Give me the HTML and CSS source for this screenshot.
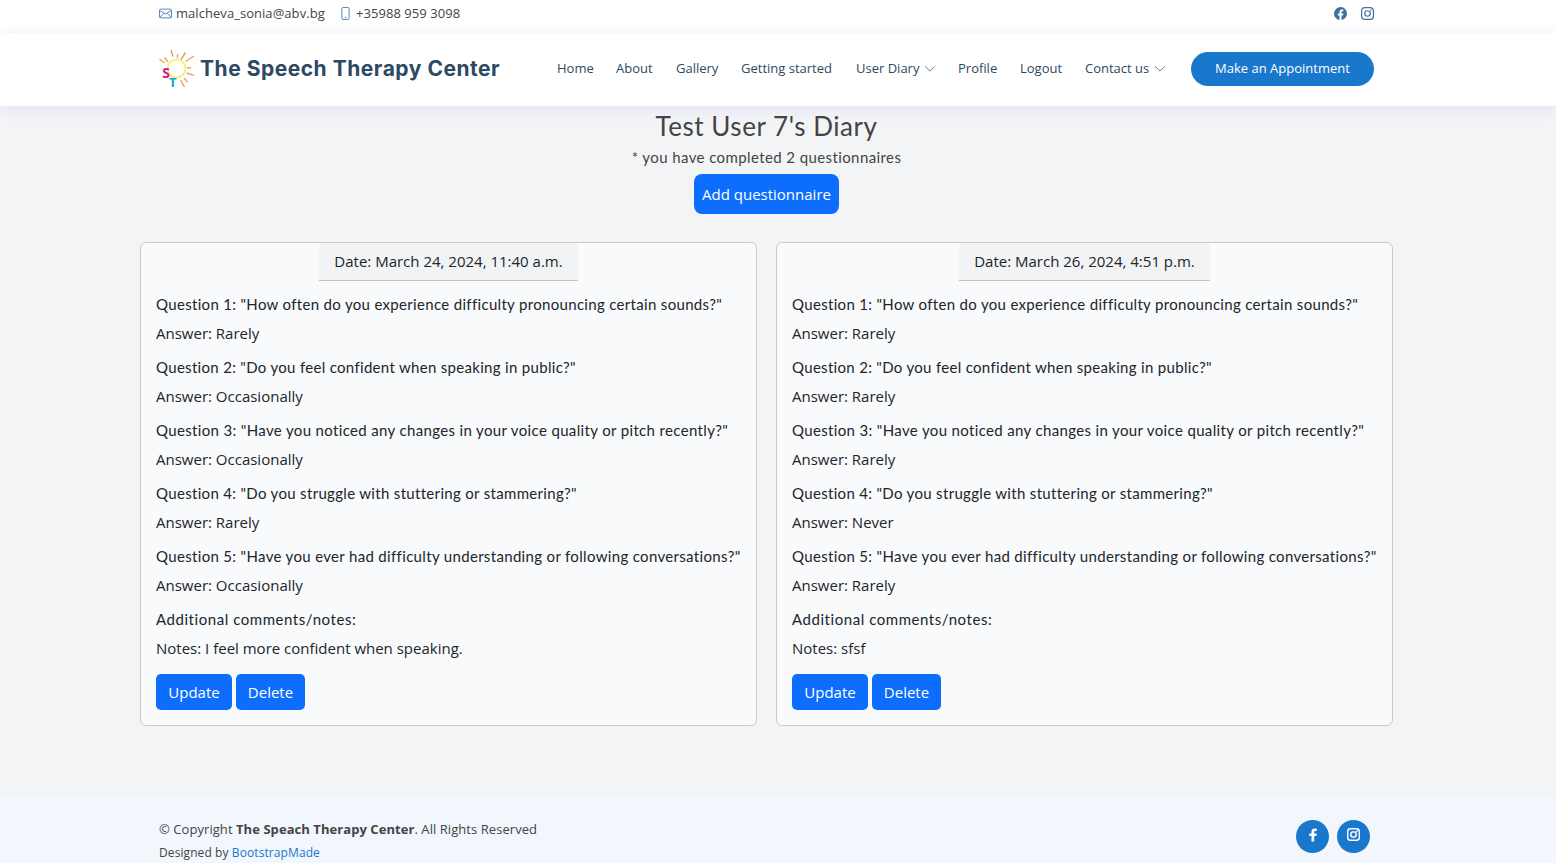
FILE: index.html
```html
<!DOCTYPE html>
<html lang="en">
<head>
<meta charset="utf-8">
<title>The Speech Therapy Center</title>
<link rel="stylesheet" href="styles.css">
</head>
<body>
<svg class="defs" width="0" height="0">
  <symbol id="instagram" viewBox="0 0 16 16"><path fill-rule="evenodd" d="M4.7 0h6.6A4.7 4.7 0 0 1 16 4.700v6.600A4.700 4.700 0 0 1 11.300 16H4.700A4.700 4.700 0 0 1 0 11.300V4.700A4.700 4.700 0 0 1 4.700 0zm.1 1.450A3.350 3.350 0 0 0 1.450 4.800v6.400a3.350 3.350 0 0 0 3.350 3.350h6.400a3.350 3.350 0 0 0 3.350-3.350V4.800a3.350 3.350 0 0 0-3.350-3.350zM8 3.900a4.100 4.100 0 1 1 0 8.200 4.100 4.100 0 0 1 0-8.200zm0 1.440a2.660 2.660 0 1 0 0 5.320 2.660 2.660 0 0 0 0-5.320z"/><circle cx="12.270" cy="3.730" r=".96"/></symbol>
  <symbol id="chevron" viewBox="0 0 12 12"><path d="M1.300 3.500 6 8.200l4.700-4.700" fill="none" stroke="currentColor" stroke-width="1" stroke-linecap="round" stroke-linejoin="round"/></symbol>
</svg>
<div class="topbar">
  <div class="container topbar-row">
    <div class="contact">
      <svg class="icon-mail" viewBox="0 0 16 16" width="13" height="13"><g fill="none" stroke="currentColor" stroke-width="1.200"><rect x=".6" y="2.600" width="14.800" height="10.800" rx="1.500"/><path d="M.8 4.300 8 8.600l7.200-4.300M.9 12.700l5.300-5.100M15.100 12.700 9.800 7.600"/></g></svg>
      <span class="mail">malcheva_sonia@abv.bg</span>
      <svg class="icon-phone" viewBox="0 0 16 16" width="13" height="13"><rect x="3.500" y=".6" width="9" height="14.800" rx="1.500" fill="none" stroke="currentColor" stroke-width="1.200"/><circle cx="8" cy="13" r="1" fill="currentColor"/></svg>
      <span class="phone">+35988 959 3098</span>
    </div>
    <div class="social">
      <svg viewBox="0 0 16 16" width="13" height="13" fill="currentColor"><path d="M16 8.050A8 8 0 1 0 6.750 16v-5.620H4.720V8.050h2.030V6.280c0-2.020 1.200-3.130 3.020-3.130.88 0 1.790.16 1.790.16v1.980h-1.010c-1 0-1.300.62-1.300 1.260v1.500h2.220l-.36 2.330H9.250V16A8 8 0 0 0 16 8.050z"/></svg>
      <svg width="13" height="13" fill="currentColor"><use href="#instagram"/></svg>
    </div>
  </div>
</div>
<header class="header">
  <div class="container header-row">
    <div class="brand">
      <svg class="logo" viewBox="0 0 38 40" width="38" height="40">
        <circle cx="17.500" cy="19.500" r="9" fill="none" stroke="#f8ee60" stroke-width="1.700"/>
        <g stroke="#e8a068" stroke-width="1.400" fill="none">
          <path d="M12 .8 14 7.800M18.500 5v4M26.500 3.500l-4.500 7M35 7l-8.500 5.500M.5 10l5 4M5.500 8.500 9 13M28 18.700h4M27.500 24l7.500 2.300M21.500 31l4 7M25 29l3.500 4"/>
        </g>
        <text class="logo-s" x="3.300" y="28.500">S</text>
        <text class="logo-t" x="10" y="38">T</text>
      </svg>
      <span class="name">The Speech Therapy Center</span>
    </div>
    <nav class="nav">
      <a>Home</a><a>About</a><a>Gallery</a><a>Getting started</a>
      <a>User Diary<svg width="12" height="12"><use href="#chevron"/></svg></a>
      <a>Profile</a><a>Logout</a>
      <a>Contact us<svg width="12" height="12"><use href="#chevron"/></svg></a>
    </nav>
    <a class="appointment">Make an Appointment</a>
  </div>
</header>
<main class="main">
  <h1 class="title">Test User 7's Diary</h1>
  <p class="subtitle">* you have completed 2 questionnaires</p>
  <a class="add">Add questionnaire</a>
  <div class="cards">
    <article class="card">
      <div class="date date-a">Date: March 24, 2024, 11:40 a.m.</div>
      <h2 class="q q1">Question 1: "How often do you experience difficulty pronouncing certain sounds?"</h2><p class="a">Answer: Rarely</p>
      <h2 class="q q2">Question 2: "Do you feel confident when speaking in public?"</h2><p class="a">Answer: Occasionally</p>
      <h2 class="q q3">Question 3: "Have you noticed any changes in your voice quality or pitch recently?"</h2><p class="a">Answer: Occasionally</p>
      <h2 class="q q4">Question 4: "Do you struggle with stuttering or stammering?"</h2><p class="a">Answer: Rarely</p>
      <h2 class="q q5">Question 5: "Have you ever had difficulty understanding or following conversations?"</h2><p class="a">Answer: Occasionally</p>
      <h2 class="q q6">Additional comments/notes:</h2><p class="a">Notes: I feel more confident when speaking.</p>
      <div class="actions"><a class="btn update">Update</a><a class="btn delete">Delete</a></div>
    </article>
    <article class="card">
      <div class="date date-b">Date: March 26, 2024, 4:51 p.m.</div>
      <h2 class="q q1">Question 1: "How often do you experience difficulty pronouncing certain sounds?"</h2><p class="a">Answer: Rarely</p>
      <h2 class="q q2">Question 2: "Do you feel confident when speaking in public?"</h2><p class="a">Answer: Rarely</p>
      <h2 class="q q3">Question 3: "Have you noticed any changes in your voice quality or pitch recently?"</h2><p class="a">Answer: Rarely</p>
      <h2 class="q q4">Question 4: "Do you struggle with stuttering or stammering?"</h2><p class="a">Answer: Never</p>
      <h2 class="q q5">Question 5: "Have you ever had difficulty understanding or following conversations?"</h2><p class="a">Answer: Rarely</p>
      <h2 class="q q6">Additional comments/notes:</h2><p class="a">Notes: sfsf</p>
      <div class="actions"><a class="btn update">Update</a><a class="btn delete">Delete</a></div>
    </article>
  </div>
</main>
<footer class="footer">
  <div class="container footer-row">
    <div>
      <div class="copyright">© Copyright <strong>The Speach Therapy Center</strong>. All Rights Reserved</div>
      <div class="credits">Designed by <a>BootstrapMade</a></div>
    </div>
    <div class="circles">
      <a><svg viewBox="0 0 16 16" width="16" height="16" fill="currentColor"><path d="M9.200 14.500V8.900h2.200l.3-2.500H9.200V5.100c0-.7.2-1.200 1.200-1.200h1.400V1.700c-.3 0-1-.1-1.900-.1-2.100 0-3.400 1.100-3.400 3.200v1.600H4.300v2.500h2.200v5.600z"/></svg></a>
      <a><svg width="13" height="13" fill="currentColor" stroke="currentColor" stroke-width=".5"><use href="#instagram"/></svg></a>
    </div>
  </div>
</footer>
</body>
</html>
```
FILE: styles.css
```css
* { box-sizing: border-box; }
body { margin: 0; height: 863px; overflow: hidden; display: flex; flex-direction: column; background: #f3f4f6; color: #444; font: 400 13px "Open Sans", sans-serif; }
h1, h2, p { margin: 0; font-weight: 400; }
a { white-space: nowrap; }
svg { flex: none; }
.defs { position: absolute; }
.container { width: 1215px; margin-left: 159px; display: flex; }
.topbar { height: 33px; flex: none; background: #fff; }
.topbar-row { height: 27px; align-items: center; justify-content: space-between; }
.contact { display: flex; align-items: center; white-space: nowrap; letter-spacing: .05px; }
.contact svg { color: #5585bd; }
.contact span { padding-bottom: 2px; }
.mail { width: 149px; margin: 0 14px 0 4px; }
.phone { margin-left: 4px; }
.social { display: flex; gap: 14px; color: #437099; }
.header { height: 73px; flex: none; background: #fff; box-shadow: 0 2px 15px rgba(25, 80, 204, .1); position: relative; }
.header-row { height: 73px; align-items: center; }
.brand { display: flex; align-items: center; width: 398px; }
.logo { margin-top: -1px; overflow: visible; }
.logo-s, .logo-t { font: 700 14px "Open Sans", sans-serif; }
.logo-s { fill: #d9148c; }
.logo-t { fill: #159fd8; font-size: 13px; }
.name { margin: -1px 0 0 3px; font: 700 21px/30px Inter, sans-serif; letter-spacing: .52px; color: #2c4964; white-space: nowrap; }
.nav { display: grid; grid-template-columns: 59px 60px 65px 115px 102px 62px 65px 106px; color: #2c4964; margin-top: -4px; }
.nav a { display: flex; align-items: center; gap: 5px; }
.nav svg { color: #708090; margin-top: 2px; }
.appointment { width: 183px; height: 34px; margin-top: -1px; padding-bottom: 2px; border-radius: 17px; background: #1977cc; color: #fff; font-weight: 500; display: grid; place-items: center; }
.main { flex: none; height: 691px; width: 1253px; margin-left: 140px; display: flex; flex-direction: column; align-items: center; }
.title { font: 400 26px/40px Lato, sans-serif; letter-spacing: .53px; white-space: nowrap; }
.subtitle { font: 400 15px/24px Lato, sans-serif; letter-spacing: .4px; position: relative; top: -1px; white-space: nowrap; }
.add { width: 145px; height: 40px; margin: 4px 0 28px; border-radius: 8px; background: #0d6efd; color: #fff; font-size: 15px; font-weight: 500; display: grid; place-items: center; }
.cards { display: grid; grid-template-columns: 617px 617px; gap: 19px; }
.card { height: 484px; border: 1px solid #c8cacd; border-radius: 6px; background: #f8fafc; padding: 0 15px; color: #212529; }
.date { height: 38px; margin: 0 auto 9px; background: #f1f3f4; border-bottom: 1px solid #c5c6c8; border-radius: 4px 4px 0 0; font-size: 15px; line-height: 37px; text-align: center; white-space: nowrap; }
.date-a { width: 259px; }
.date-b { width: 251px; }
.q { font: 400 15px/29px Lato, sans-serif; white-space: nowrap; }
.q1 { letter-spacing: .32px; }
.q2 { letter-spacing: .31px; }
.q3 { letter-spacing: .35px; }
.q4 { letter-spacing: .32px; }
.q5 { letter-spacing: .33px; }
.q6 { letter-spacing: .55px; }
.a { font-size: 15px; line-height: 29px; margin-bottom: 5px; }
.actions { display: flex; gap: 4px; padding-top: 6px; }
.btn { height: 36px; border-radius: 5px; background: #0d6efd; color: #fff; font-size: 15px; font-weight: 500; display: grid; place-items: center; }
.update { width: 76px; }
.delete { width: 69px; }
.footer { flex: 1; background: #f1f7fd; }
.footer-row { justify-content: space-between; padding-top: 22px; }
.copyright { line-height: 20px; letter-spacing: .06px; }
.credits { font-size: 12px; line-height: 20px; margin-top: 4px; letter-spacing: .09px; }
.credits a { color: #1977cc; }
.circles { display: flex; gap: 8px; margin: 1px 4px 0 0; }
.circles a { width: 33px; height: 33px; border-radius: 50%; background: #1977cc; color: #fff; display: grid; place-items: center; padding-bottom: 4px; }
```
